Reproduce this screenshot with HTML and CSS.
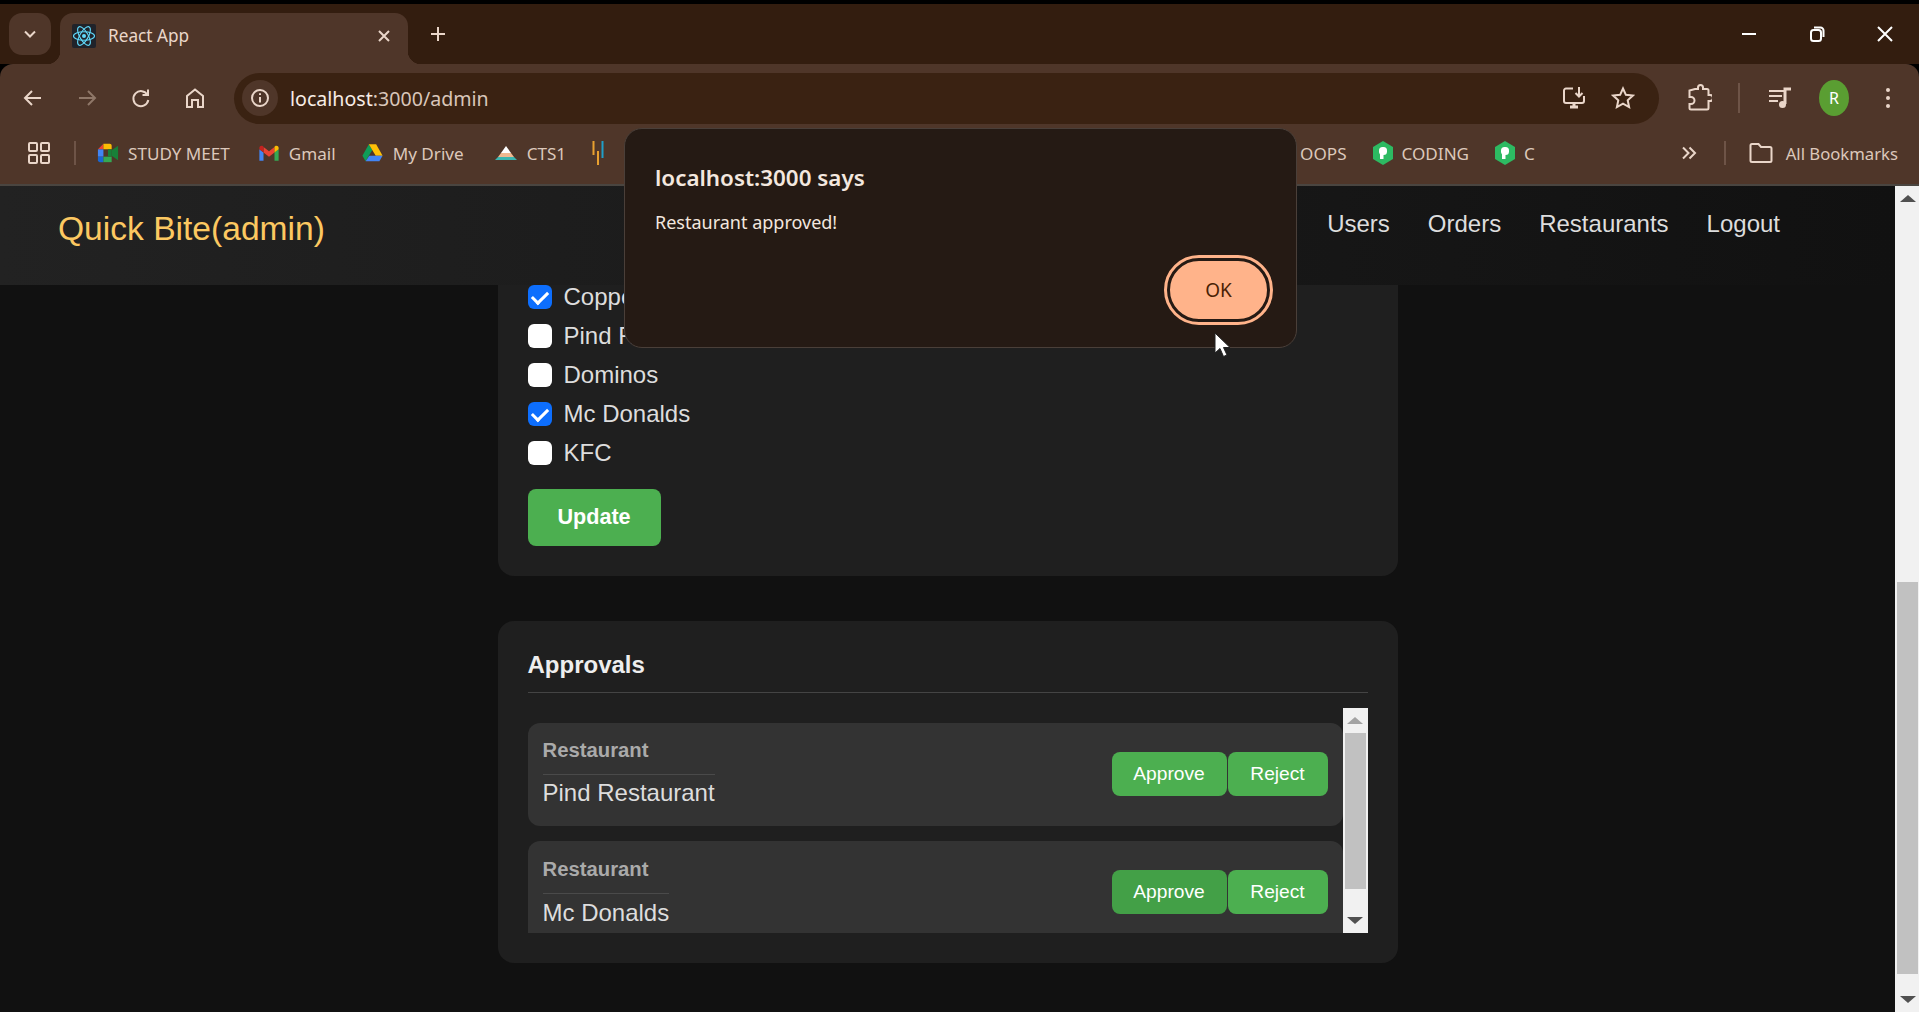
FILE: index.html
```html
<!doctype html>
<html>
    <head>
        <title>React App</title>
        <meta charset="utf-8">
        <link rel="stylesheet" href="styles.css">
    </head>
    <body>
        <div id="chrome">
            <div id="tabstrip">
                <div class="tab-list"><svg width="16" height="16" viewBox="0 0 16 16"><path d="M3 5.5l5 5 5-5" class="line"/></svg></div>
                <div class="tab">
                    <svg class="favicon" width="24" height="24" viewBox="0 0 24 24">
                        <rect width="24" height="24" rx="2" fill="#20232a"/>
                        <g fill="none" stroke="#61dafb" stroke-width="1.1">
                            <ellipse cx="12" cy="12" rx="10.5" ry="4.2"/>
                            <ellipse cx="12" cy="12" rx="10.5" ry="4.2" transform="rotate(60 12 12)"/>
                            <ellipse cx="12" cy="12" rx="10.5" ry="4.2" transform="rotate(120 12 12)"/>
                        </g>
                        <circle cx="12" cy="12" r="2" fill="#61dafb"/>
                    </svg>
                    <span class="tab-title">React App</span>
                    <svg class="tab-close" width="16" height="16" viewBox="0 0 16 16"><path d="M3 3l10 10M13 3L3 13" class="line"/></svg>
                </div>
                <div class="new-tab"><svg width="18" height="18" viewBox="0 0 18 18"><path d="M9 2v14M2 9h14" class="line"/></svg></div>
                <div class="window-controls">
                    <div class="window-btn"><svg width="16" height="16" viewBox="0 0 16 16"><path d="M1 8h14" class="line"/></svg></div>
                    <div class="window-btn"><svg width="18" height="18" viewBox="0 0 18 18"><rect x="3" y="5" width="10" height="11" rx="2.5" class="line"/><path d="M6 2.5h6.5a3 3 0 0 1 3 3V12" class="line"/></svg></div>
                    <div class="window-btn"><svg width="18" height="18" viewBox="0 0 18 18"><path d="M2 2l14 14M16 2L2 16" class="line"/></svg></div>
                </div>
            </div>
            <div id="toolbar">
                <div class="nav-row">
                    <div class="nav-btn"><svg width="22" height="22" viewBox="0 0 22 22"><path d="M19 11H3M10 4l-7 7 7 7" class="line"/></svg></div>
                    <div class="nav-btn dim"><svg width="22" height="22" viewBox="0 0 22 22"><path d="M3 11h16M12 4l7 7-7 7" class="line"/></svg></div>
                    <div class="nav-btn"><svg width="22" height="22" viewBox="0 0 22 22"><path d="M17.5 8a7.5 7.5 0 1 0 .8 5" class="line"/><path d="M18 2.5V8h-5.5" class="line"/></svg></div>
                    <div class="nav-btn"><svg width="22" height="22" viewBox="0 0 22 22"><path d="M3 20V9l8-6.5L19 9v11h-5v-7H8v7z" class="line"/></svg></div>
                    <div class="omnibox">
                        <div class="site-info"><svg width="20" height="20" viewBox="0 0 20 20"><circle cx="10" cy="10" r="8" class="line"/><path d="M10 9v5.5M10 5.2v1.8" class="line"/></svg></div>
                        <div class="url">localhost<span class="url-rest">:3000/admin</span></div>
                        <div class="omni-icon"><svg width="26" height="26" viewBox="0 0 26 26"><path d="M12 3.5H5a2 2 0 0 0-2 2V16a2 2 0 0 0 2 2h16a2 2 0 0 0 2-2v-5" class="line"/><path d="M9 22h8M13 18v4" class="line thick"/><path d="M18 2v9M14.5 8l3.5 3.5L21.500 8" class="line"/></svg></div>
                        <div class="omni-icon"><svg width="24" height="24" viewBox="0 0 24 24"><path d="M12 2.500l2.900 6.300 6.900.8-5.100 4.700 1.400 6.800L12 17.600l-6.100 3.500 1.400-6.800-5.100-4.700 6.900-.8z" class="line"/></svg></div>
                    </div>
                    <div class="tool-btn ext"><svg width="26" height="28" viewBox="0 0 26 28"><path d="M9 5h3V3.500a2.500 2.500 0 0 1 5 0V5h4a1.500 1.500 0 0 1 1.500 1.500V11H24a3 3 0 0 1 0 6h-1.500v7a1.500 1.500 0 0 1-1.500 1.500H5A1.500 1.500 0 0 1 3.500 24v-4H5a3.500 3.500 0 0 0 0-7H3.500V6.500z" class="line"/></svg></div>
                    <div class="tool-sep"></div>
                    <div class="tool-btn media"><svg width="26" height="24" viewBox="0 0 26 24"><path d="M2 5h15M2 10h13M2 15h9" class="line"/><path d="M18 18V3h6" class="line thick"/><circle cx="15.500" cy="18.500" r="3.500" fill="#ead6c9"/></svg></div>
                    <div class="avatar">R</div>
                    <div class="tool-btn kebab"><span class="dot"></span><span class="dot"></span><span class="dot"></span></div>
                </div>
                <div class="bookmarks">
                    <svg class="apps" width="24" height="24" viewBox="0 0 24 24"><rect x="2" y="2" width="8" height="8" rx="1" class="line"/><rect x="14" y="2" width="8" height="8" rx="1" class="line"/><rect x="2" y="14" width="8" height="8" rx="1" class="line"/><rect x="14" y="14" width="8" height="8" rx="1" class="line"/></svg>
                    <div class="bm-sep"></div>
                    <div class="bookmark first">
                        <svg width="22" height="22" viewBox="0 0 24 24">
                            <path d="M7 2L1 8h6z" fill="#ea4335"/><path d="M1 8h6v8H1z" fill="#4285f4"/>
                            <path d="M1 16h6v6H3a2 2 0 0 1-2-2z" fill="#1967d2"/><path d="M7 16h9v6H7z" fill="#34a853"/>
                            <path d="M7 2h7a2 2 0 0 1 2 2v4H7z" fill="#fbbc04"/><path d="M16 9l7-5v16l-7-5z" fill="#188038"/><path d="M16 8v8H12V8z" fill="#188038"/>
                        </svg>
                        <span>STUDY MEET</span>
                    </div>
                    <div class="bookmark gmail">
                        <svg width="22" height="22" viewBox="0 0 24 24">
                            <path d="M1.500 20.500H6V11.500L1.500 8z" fill="#4285f4"/><path d="M18 20.500h4.500V8L18 11.500z" fill="#34a853"/>
                            <path d="M6 11.500V5.500l6 4.500 6-4.500v6L12 16z" fill="#ea4335"/>
                            <path d="M1.500 8V6.500c0-2 2.300-3.100 3.900-1.900l.6.500v6.400z" fill="#c5221f"/><path d="M18 11.500V5.100l.6-.5c1.600-1.200 3.900-.1 3.900 1.900V8z" fill="#fbbc04"/>
                        </svg>
                        <span>Gmail</span>
                    </div>
                    <div class="bookmark drive">
                        <svg width="23" height="22" viewBox="0 0 24 24">
                            <path d="M8 2.500L1 15l3.500 6L11.800 8.800z" fill="#0f9d58"/><path d="M8 2.500h8L23 15h-7.500z" fill="#ffc107"/>
                            <path d="M8.500 15L4.500 21h15L23 15z" fill="#4285f4"/>
                        </svg>
                        <span>My Drive</span>
                    </div>
                    <div class="bookmark cts">
                        <svg width="24" height="20" viewBox="0 0 24 20">
                            <path d="M12 3l5 7H7z" fill="#fff"/><path d="M7 10h10l3 4H4z" fill="#f0b890"/><path d="M4 14h16l3 3H1z" fill="#3cb6b0"/>
                        </svg>
                        <span>CTS1</span>
                    </div>
                    <svg class="stripes" width="12" height="28" viewBox="0 0 12 28"><path d="M1.500 2v14" stroke="#e8a030" stroke-width="2"/><path d="M6 12v14" stroke="#e8a030" stroke-width="2"/><path d="M10.500 2v17" stroke="#1f9fc8" stroke-width="2"/></svg>
                    <div class="bm-hidden"></div>
                    <div class="bookmark oops"><span>OOPS</span></div>
                    <div class="bookmark">
                        <svg width="20" height="24" viewBox="0 0 20 24"><polygon points="10,0 20,6 20,18 10,24 0,18 0,6" fill="#2dba62"/><rect x="6" y="6" width="8" height="8" rx="3.500" fill="#fff"/><rect x="7" y="8" width="3.500" height="10" fill="#fff"/></svg>
                        <span>CODING</span>
                    </div>
                    <div class="bookmark">
                        <svg width="20" height="24" viewBox="0 0 20 24"><polygon points="10,0 20,6 20,18 10,24 0,18 0,6" fill="#2dba62"/><rect x="6" y="6" width="8" height="8" rx="3.500" fill="#fff"/><rect x="7" y="8" width="3.500" height="10" fill="#fff"/></svg>
                        <span>C</span>
                    </div>
                    <svg class="overflow" width="16" height="16" viewBox="0 0 16 16"><path d="M2 2.500L7.500 8 2 13.500M8.500 2.500L14 8l-5.500 5.500" class="line"/></svg>
                    <div class="bm-sep end"></div>
                    <div class="bookmark all">
                        <svg width="24" height="22" viewBox="0 0 24 22"><path d="M1.500 3.500a1.500 1.500 0 0 1 1.500-1.500h6.500l2.500 3h9a1.500 1.500 0 0 1 1.500 1.500V18.500a1.500 1.500 0 0 1-1.500 1.500H3a1.500 1.500 0 0 1-1.500-1.500z" class="line"/></svg>
                        <span>All Bookmarks</span>
                    </div>
                </div>
            </div>
        </div>

        <div id="viewport">
            <div id="page">
                <div id="navbar">
                    <div class="brand">Quick Bite(admin)</div>
                    <div class="nav-links">
                        <span>Users</span>
                        <span>Orders</span>
                        <span>Restaurants</span>
                        <span>Logout</span>
                    </div>
                </div>
                <div class="card top-card">
                    <label class="check-row"><input type="checkbox" checked> Copper Kettle</label>
                    <label class="check-row"><input type="checkbox"> Pind Restaurant</label>
                    <label class="check-row"><input type="checkbox"> Dominos</label>
                    <label class="check-row"><input type="checkbox" checked> Mc Donalds</label>
                    <label class="check-row"><input type="checkbox"> KFC</label>
                    <button class="update-btn">Update</button>
                </div>
                <div class="card approvals">
                    <h2>Approvals</h2>
                    <div class="approval-box">
                        <div class="approval-list">
                            <div class="approval-item">
                                <div class="approval-info">
                                    <div class="approval-label">Restaurant</div>
                                    <div class="approval-name">Pind Restaurant</div>
                                </div>
                                <button class="btn approve">Approve</button>
                                <button class="btn reject">Reject</button>
                            </div>
                            <div class="approval-item second">
                                <div class="approval-info">
                                    <div class="approval-label">Restaurant</div>
                                    <div class="approval-name">Mc Donalds</div>
                                </div>
                                <button class="btn approve hover">Approve</button>
                                <button class="btn reject">Reject</button>
                            </div>
                        </div>
                        <div class="scrollbar inner">
                            <div class="arrow up faint"></div>
                            <div class="track"><div class="thumb"></div></div>
                            <div class="arrow down"></div>
                        </div>
                    </div>
                </div>
            </div>
            <div class="scrollbar outer">
                <div class="arrow up"></div>
                <div class="track"><div class="thumb"></div></div>
                <div class="arrow down"></div>
            </div>
        </div>

        <div id="dialog">
            <div class="dialog-title">localhost:3000 says</div>
            <div class="dialog-msg">Restaurant approved!</div>
            <div class="dialog-actions">
                <button class="ok-btn">OK</button>
            </div>
        </div>
        <svg id="cursor" width="18" height="26" viewBox="0 0 18 26"><path d="M1 1v20l5-4.500 3.500 8 3.500-1.500-3.500-7.500H16z" fill="#fff" stroke="#222" stroke-width="1"/></svg>
    </body>
</html>
```
FILE: styles.css
```css
* {
    box-sizing: border-box;
}
html, body {
    margin: 0;
    height: 1012px;
    overflow: hidden;
    background-color: #000000;
    font-family: "Liberation Sans", Arial, sans-serif;
}
.line {
    fill: none;
    stroke: #ead6c9;
    stroke-width: 2;
}
.thick {
    stroke-width: 3;
}

/* browser chrome */
#chrome {
    padding-top: 4px;
    font-family: "Noto Sans", sans-serif;
}
#tabstrip {
    display: flex;
    height: 60px;
    padding: 9px 0 0 9px;
    background-color: #331d0f;
}
.tab-list {
    display: flex;
    align-items: center;
    justify-content: center;
    width: 42px;
    height: 42px;
    border-radius: 13px;
    background-color: #4f3629;
}
.tab {
    position: relative;
    display: flex;
    align-items: center;
    width: 348px;
    height: 51px;
    margin-left: 9px;
    padding: 0 16px 6px 12px;
    border-radius: 13px 13px 0 0;
    background-color: #4f3629;
}
.tab::before, .tab::after {
    content: "";
    position: absolute;
    bottom: 0;
    width: 13px;
    height: 13px;
}
.tab::before {
    left: -13px;
    background-image: radial-gradient(circle at 0 0, transparent 13px, #4f3629 13.5px);
}
.tab::after {
    right: -13px;
    background-image: radial-gradient(circle at 100% 0, transparent 13px, #4f3629 13.5px);
}
.tab-title {
    flex: 1;
    margin-left: 12px;
    font-size: 17.2px;
    color: #ead6c9;
}
.new-tab {
    display: flex;
    align-items: center;
    justify-content: center;
    width: 36px;
    height: 42px;
    margin-left: 12px;
}
.window-controls {
    display: flex;
    margin-left: auto;
}
.window-btn {
    display: flex;
    align-items: center;
    justify-content: center;
    width: 68px;
    height: 42px;
}
.window-btn .line {
    stroke: #ffffff;
}
#toolbar {
    height: 122px;
    border-bottom: 2px solid #4a4540;
    border-radius: 13px 13px 0 0;
    background-color: #4f3629;
}
.nav-row {
    display: flex;
    align-items: center;
    height: 68px;
    padding: 0 11px 0 6px;
}
.nav-btn {
    display: flex;
    align-items: center;
    justify-content: center;
    width: 54px;
    height: 40px;
}
.dim .line {
    stroke: #8f7768;
}
.omnibox {
    display: flex;
    flex: 1;
    align-items: center;
    height: 51px;
    margin-left: 12px;
    padding: 0 16px 0 8px;
    border-radius: 26px;
    background-color: #3a2212;
}
.site-info {
    display: flex;
    align-items: center;
    justify-content: center;
    width: 36px;
    height: 36px;
    border-radius: 18px;
    background-color: #4f3629;
}
.url {
    flex: 1;
    margin-left: 12px;
    font-size: 19.6px;
    color: #f7ece5;
}
.url-rest {
    color: #d9c6ba;
}
.omni-icon {
    display: flex;
    align-items: center;
    justify-content: center;
    width: 40px;
    height: 40px;
    margin-left: 9px;
}
.tool-btn {
    display: flex;
    align-items: center;
    justify-content: center;
    width: 40px;
    height: 40px;
    margin-left: 20px;
}
.tool-sep {
    width: 2px;
    height: 30px;
    margin-left: 19px;
    background-color: #6e5447;
}
.avatar {
    width: 30px;
    height: 36px;
    margin-left: 19px;
    border-radius: 50%;
    background-color: #5a9e32;
    font-size: 16px;
    line-height: 36px;
    text-align: center;
    color: #ffffff;
}
.kebab {
    flex-direction: column;
    gap: 4px;
    margin-left: 19px;
}
.dot {
    width: 4px;
    height: 4px;
    border-radius: 2px;
    background-color: #ead6c9;
}
.bookmarks {
    display: flex;
    align-items: center;
    height: 44px;
    padding: 0 0 2px 27px;
    font-size: 17.1px;
    color: #dcc8bb;
}
.bm-sep {
    width: 2px;
    height: 24px;
    margin-left: 23px;
    background-color: #6e5447;
}
.bookmark {
    display: flex;
    align-items: center;
    gap: 9px;
    margin-left: 26px;
}
.bookmark.first {
    margin-left: 21px;
}
.bookmark.gmail {
    margin-left: 28px;
}
.bookmark.drive {
    margin-left: 25px;
}
.bookmark.cts {
    margin-left: 30px;
}
.stripes {
    margin-left: 26px;
}
.bm-hidden {
    width: 696px;
}
.bookmark.oops {
    margin-left: 0;
}
.overflow {
    margin-left: auto;
}
.bm-sep.end {
    margin-left: 27px;
}
.bookmark.all {
    gap: 13px;
    margin-left: 23px;
    padding-right: 21px;
    font-size: 16.7px;
}

/* page */
#viewport {
    display: flex;
    height: 826px;
    overflow: hidden;
}
#page {
    flex: 1;
    background-color: #111111;
    color: #dddddd;
}
#navbar {
    display: flex;
    justify-content: space-between;
    height: 99px;
    padding: 24px 115px 0 58px;
    background-image: linear-gradient(to right, #222222, #111111);
}
.brand {
    font-size: 33.6px;
    color: #fcc861;
}
.nav-links {
    display: flex;
    gap: 38px;
    font-size: 24px;
}
.card {
    width: 900px;
    margin: 0 auto;
    padding: 30px;
    border-radius: 16px;
    background-color: #1f1f1f;
}
.top-card {
    display: flex;
    flex-direction: column;
    align-items: flex-start;
    gap: 15px;
    padding-top: 0;
    border-radius: 0 0 16px 16px;
}
.check-row {
    display: flex;
    align-items: center;
    gap: 12px;
    font-size: 24px;
    line-height: 24px;
}
.check-row input {
    display: flex;
    align-items: center;
    justify-content: center;
    width: 24px;
    height: 24px;
    margin: 0;
    border-radius: 6px;
    background-color: #ffffff;
    appearance: none;
}
.check-row input:checked {
    background-color: #0d6efd;
}
.check-row input:checked::after {
    content: "";
    width: 7px;
    height: 13px;
    margin-top: -3px;
    border-right: 3.5px solid #ffffff;
    border-bottom: 3.5px solid #ffffff;
    transform: rotate(45deg);
}
.update-btn {
    width: 133px;
    height: 57px;
    margin-top: 9px;
    padding-bottom: 3px;
    border: none;
    border-radius: 8px;
    background-color: #4caf50;
    font-family: inherit;
    font-size: 21.6px;
    font-weight: bold;
    color: #ffffff;
}
.approvals {
    height: 342px;
    margin-top: 45px;
    padding-top: 29px;
}
.approvals h2 {
    margin: 0;
    padding-bottom: 12px;
    border-bottom: 1px solid #444444;
    font-size: 24px;
    line-height: 30px;
    color: #eeeeee;
}
.approval-box {
    display: flex;
    height: 225px;
    margin-top: 15px;
}
.approval-list {
    flex: 1;
    height: 225px;
    padding-top: 15px;
    overflow: hidden;
}
.approval-item {
    display: flex;
    align-items: center;
    height: 103px;
    padding: 0 15px;
    border-radius: 12px;
    background-color: #333333;
}
.second {
    margin-top: 15px;
}
.second .approval-label {
    margin-top: 2px;
}
.second .approval-name {
    margin-top: 1px;
}
.approval-info {
    margin-right: auto;
}
.approval-label {
    padding-bottom: 12px;
    border-bottom: 1px solid #4a4a4a;
    font-size: 20.3px;
    line-height: 24px;
    font-weight: bold;
    color: #aaaaaa;
}
.approval-name {
    font-size: 24px;
    line-height: 36px;
    color: #dddddd;
}
.btn {
    height: 44px;
    margin-bottom: 2px;
    border: none;
    border-radius: 8px;
    background-color: #4caf50;
    font-family: inherit;
    font-size: 19.2px;
    color: #ffffff;
}
.approve {
    width: 115px;
}
.reject {
    width: 100px;
    margin-left: 1px;
}
.hover {
    background-color: #43a047;
}

/* scrollbars are drawn, the reference has classic arrows */
.scrollbar {
    display: flex;
    flex-direction: column;
    width: 24px;
    background-color: #f1f1f1;
}
.scrollbar.inner {
    width: 25px;
    padding: 0 2px;
}
.scrollbar.outer {
    padding: 0 1px 0 2px;
}
.arrow {
    align-self: center;
    width: 0;
    height: 0;
    border-left: 8px solid transparent;
    border-right: 8px solid transparent;
}
.up {
    margin-top: 9px;
    border-bottom: 7px solid #505050;
}
.down {
    margin-bottom: 9px;
    border-top: 7px solid #505050;
}
.faint {
    border-bottom-color: #a3a3a3;
}
.track {
    flex: 1;
}
.thumb {
    background-color: #c1c1c1;
}
.inner .thumb {
    height: 156px;
    margin-top: 9px;
}
.outer .thumb {
    height: 392px;
    margin-top: 380px;
}

/* alert */
#dialog {
    position: absolute;
    left: 624px;
    top: 128px;
    width: 673px;
    height: 220px;
    padding: 34px 30px 0;
    border: 1px solid #4a3f39;
    border-radius: 18px;
    background-color: #251a14;
    font-family: "Noto Sans", sans-serif;
    color: #f3e7df;
}
.dialog-title {
    font-size: 22.4px;
    line-height: 30px;
    font-weight: 600;
}
.dialog-msg {
    margin-top: 14px;
    font-size: 18px;
    line-height: 30px;
}
.dialog-actions {
    display: flex;
    justify-content: flex-end;
}
.ok-btn {
    width: 103px;
    height: 64px;
    margin: 21px -4px 0 0;
    border: 3px solid #251a14;
    border-radius: 34px;
    outline: 3px solid #ffb38a;
    background-color: #ffb38a;
    font-family: inherit;
    font-size: 19px;
    color: #4a1f05;
}
#cursor {
    position: absolute;
    left: 1214px;
    top: 332px;
}
```
